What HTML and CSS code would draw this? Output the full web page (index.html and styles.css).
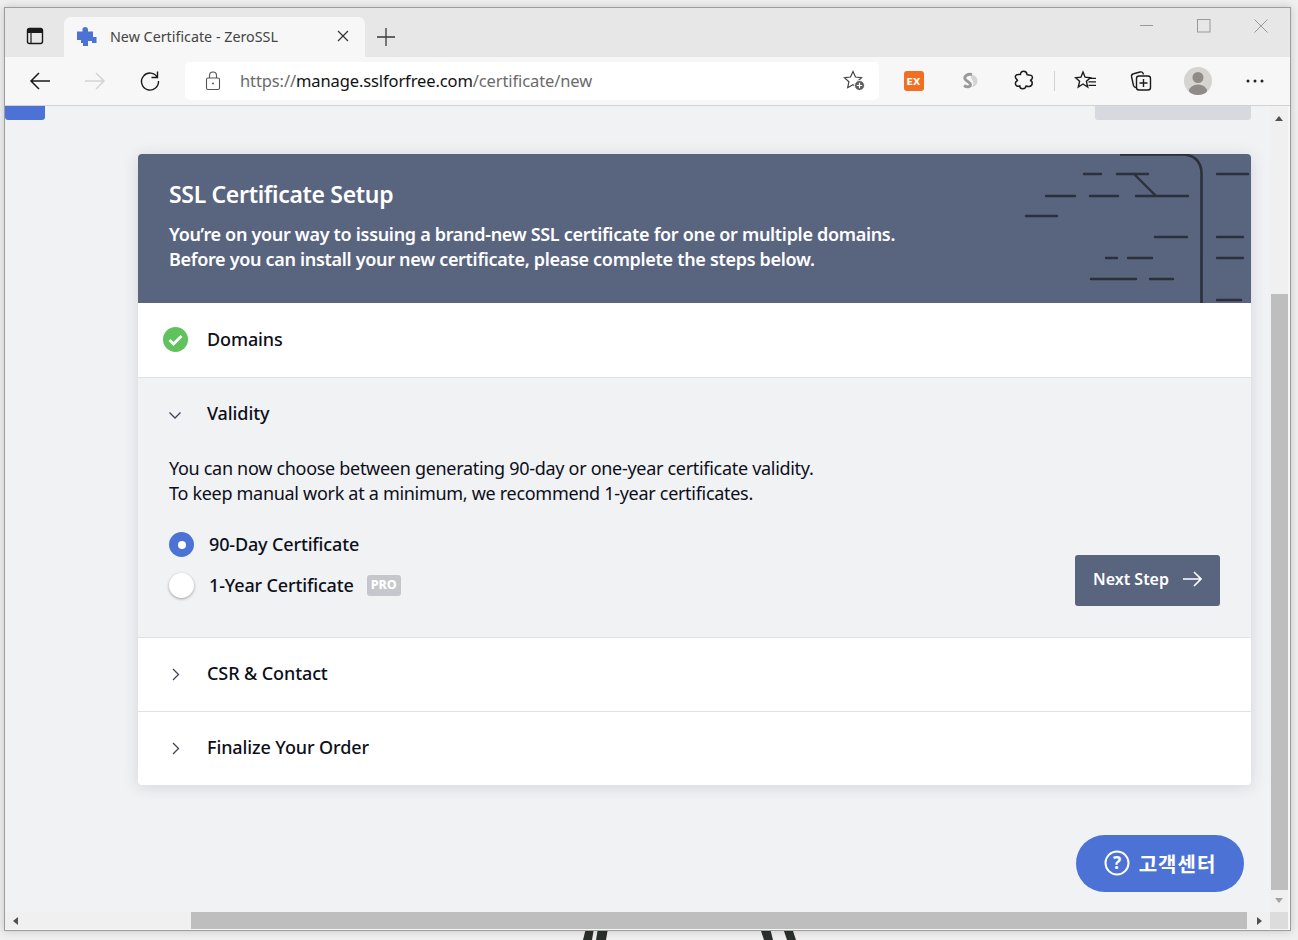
FILE: index.html
```html
<!DOCTYPE html>
<html lang="en">
<head>
<meta charset="utf-8">
<title>New Certificate - ZeroSSL</title>
<link rel="stylesheet" href="styles.css">
</head>
<body>
<svg class="desk" width="1298" height="940" viewBox="0 0 1298 940" aria-hidden="true">
  <path d="M583 940 L586 928 H594 L592 940Z M596 940 L598 928 H608 L606 940Z M760 928 H770 L773 940 H764Z M783 928 H792 L796 940 H787Z" fill="#2b302d"/>
</svg>
<div class="window">
  <div class="tabstrip">
    <div class="sidebtn">
      <svg width="20" height="20" viewBox="0 0 20 20"><rect x="2.500" y="2.500" width="15" height="15" rx="2" fill="none" stroke="#1a1a1a" stroke-width="1.400"/><path d="M2.500 4.500a2 2 0 0 1 2-2h11a2 2 0 0 1 2 2v2.500h-15z" fill="#1a1a1a"/><path d="M6 7v10.500" stroke="#1a1a1a" stroke-width="1.200"/></svg>
    </div>
    <div class="tab">
      <svg class="favicon" width="22" height="22" viewBox="0 0 22 22"><path d="M1 6.500h5.500v-1a3 3 0 0 1 2.500-3.500 3 3 0 0 1 3 3v1.500h5v5.500h3.500v6h-4.500v-2h-4v5h-5v-3h-2v-3h-4z" fill="#4d72d6"/></svg>
      <span class="tabtitle">New Certificate - ZeroSSL</span>
      <svg class="tabclose" width="12" height="12" viewBox="0 0 12 12"><path d="M1 1l10 10M11 1L1 11" stroke="#333" stroke-width="1.200"/></svg>
    </div>
    <svg class="newtab" width="18" height="18" viewBox="0 0 18 18"><path d="M9 0v18M0 9h18" stroke="#3a3a3a" stroke-width="1.300"/></svg>
    <div class="wincontrols">
      <svg class="winbtn" width="14" height="14" viewBox="0 0 14 14"><path d="M0 6.500h13" stroke="#999" stroke-width="1"/></svg>
      <svg class="winbtn" width="14" height="14" viewBox="0 0 14 14"><rect x=".5" y=".5" width="12.500" height="12.500" fill="none" stroke="#999" stroke-width="1"/></svg>
      <svg class="winbtn" width="14" height="14" viewBox="0 0 14 14"><path d="M.5 .5l13 13M13.500 .5l-13 13" stroke="#999" stroke-width="1"/></svg>
    </div>
  </div>
  <div class="toolbar">
    <div class="tbtn"><svg width="22" height="20" viewBox="0 0 22 20"><path d="M21 10H2M10 2l-8 8 8 8" fill="none" stroke="#1a1a1a" stroke-width="1.500"/></svg></div>
    <div class="tbtn"><svg width="22" height="20" viewBox="0 0 22 20"><path d="M1 10h19M12 2l8 8-8 8" fill="none" stroke="#d4d4d4" stroke-width="1.500"/></svg></div>
    <div class="tbtn"><svg width="22" height="22" viewBox="0 0 22 22"><path d="M18.500 7.500A8.500 8.500 0 1 0 19.500 11M18.500 1.500v6h-6" fill="none" stroke="#1a1a1a" stroke-width="1.400"/></svg></div>
    <div class="addressbar">
      <svg class="lock" width="16" height="20" viewBox="0 0 16 20"><rect x="1.500" y="7" width="13" height="11.500" rx="1.500" fill="none" stroke="#555" stroke-width="1.100"/><path d="M4.500 7V4.500a3.500 3.500 0 0 1 7 0V7" fill="none" stroke="#555" stroke-width="1.100"/><circle cx="8" cy="12.500" r="1" fill="#555"/></svg>
      <span class="url"><span class="urlmuted">https://</span>manage.sslforfree.com<span class="urlmuted">/certificate/new</span></span>
      <svg class="favadd" width="24" height="24" viewBox="0 0 24 24"><path d="M10 2.500l2.500 5.500 6 .7-4.400 4 1.200 6-5.300-3-5.300 3 1.200-6-4.400-4 6-.7z" fill="none" stroke="#444" stroke-width="1.200"/><circle cx="16.500" cy="16.500" r="5" fill="#5e5e5e" stroke="#fff"/><path d="M16.500 13.800v5.400M13.800 16.500h5.400" stroke="#fff" stroke-width="1.200"/></svg>
    </div>
    <div class="tbtn first"><span class="ex">EX</span></div>
    <div class="tbtn"><svg width="20" height="18" viewBox="0 0 20 18"><path d="M12 2.500c4 .5 6.500 3 6.500 6.500s-3 6-6 6c2-2 2.500-4 1-6.500-1-1.500-2-3.500-1.500-6z" fill="#d4d4d4"/><path d="M13 2.500C9 1.500 4.800 4 6 7c1 2.500 6 3 5.500 6-.3 2-3.500 2.500-6.500 .5" fill="none" stroke="#9a9a9a" stroke-width="2.800"/></svg></div>
    <div class="tbtn"><svg width="22" height="22" viewBox="0 0 22 22"><path d="M7.500 4.500c-.3-4.300 6.300-4.300 6.500 0 0 1 4-.5 5 1.500s-.3 4-2 4.500c2.800.3 3.300 5-.5 6-1.500.4-3-.6-3.500-.5-.3 3.700-6.200 3.700-6.300 0-2 1-4.700-.5-4.200-3 .3-2 2-2 2-2.500 0-1-3-2-2-4.500s4.300-1 5-1.500z" fill="none" stroke="#1a1a1a" stroke-width="1.500"/></svg></div>
    <div class="tsep"></div>
    <div class="tbtn"><svg width="24" height="24" viewBox="0 0 24 24"><path d="M9 3l2.100 5.200 5.400.5-4.100 3.600 1.300 5.700-4.700-3-4.700 3 1.300-5.700L1.500 8.700l5.400-.5z" fill="none" stroke="#1a1a1a" stroke-width="1.400"/><path d="M15.500 9.300h6.500M14.500 12.800h7.500M14.500 16.300h7.500" stroke="#1a1a1a" stroke-width="1.200"/></svg></div>
    <div class="tbtn"><svg width="24" height="24" viewBox="0 0 24 24"><path d="M7 18.500c-1 0-2-.5-2.500-2L2.600 8c-.4-2 .5-3 2-3.300L11 3c2-.5 3 .5 3.500 2.500" fill="none" stroke="#1a1a1a" stroke-width="1.400"/><rect x="7.500" y="7" width="14" height="14" rx="2.500" fill="#f7f7f7" stroke="#1a1a1a" stroke-width="1.400"/><path d="M14.500 10v8M10.500 14h8" stroke="#1a1a1a" stroke-width="1.400"/></svg></div>
    <div class="tbtn tight"><svg width="28" height="28" viewBox="0 0 28 28"><defs><clipPath id="av"><circle cx="14" cy="14" r="14"/></clipPath></defs><circle cx="14" cy="14" r="14" fill="#d5d4d0"/><g clip-path="url(#av)" fill="#8f8c88"><circle cx="14" cy="10.500" r="5.500"/><ellipse cx="14" cy="24" rx="9" ry="6.500"/></g></svg></div>
    <div class="tbtn tight"><svg width="18" height="4" viewBox="0 0 18 4"><circle cx="2" cy="2" r="1.500" fill="#222"/><circle cx="9" cy="2" r="1.500" fill="#222"/><circle cx="16" cy="2" r="1.500" fill="#222"/></svg></div>
  </div>
  <div class="viewport">
    <main class="page">
      <div class="topstub">
        <div class="stub-blue"></div>
        <div class="stub-gray"></div>
      </div>
      <section class="card">
        <header class="card-head">
          <svg class="decor" width="240" height="149" viewBox="1020 154 240 149" aria-hidden="true">
            <g fill="none" stroke="#2b303b" stroke-width="2.400" stroke-linecap="round">
              <path d="M1084 174h17M1117 174h31M1217 174h31M1046 196h29M1090 196h28M1136 196h52M1026 216h31M1155 237h32M1217 237h26M1106 258h11M1128 258h24M1217 258h26M1091 279h45M1150 279h23M1217 300h24"/>
              <path d="M1135 175l20 20"/>
              <path d="M1120 154.500h62c12 0 19.500 7 19.500 19V303" stroke-linecap="butt" stroke-width="2.600"/>
            </g>
          </svg>
          <h1 class="card-title">SSL Certificate Setup</h1>
          <p class="card-sub">You’re on your way to issuing a brand-new SSL certificate for one or multiple domains.<br>Before you can install your new certificate, please complete the steps below.</p>
        </header>
        <div class="step">
          <svg class="step-icon" width="25" height="25" viewBox="0 0 25 25"><circle cx="12.500" cy="12.500" r="12.500" fill="#5fc25c"/><path d="M6.500 13l4 4 8-8" fill="none" stroke="#fff" stroke-width="2.800"/></svg>
          <span class="step-name">Domains</span>
        </div>
        <div class="step-open">
          <div class="step">
            <svg class="step-icon" width="25" height="25" viewBox="0 0 25 25"><path d="M6.500 10.500l5.500 5.500 5.500-5.500" fill="none" stroke="#3d4356" stroke-width="1.300"/></svg>
            <span class="step-name">Validity</span>
          </div>
          <div class="step-body">
            <p class="intro">You can now choose between generating 90-day or one-year certificate validity.<br>To keep manual work at a minimum, we recommend 1-year certificates.</p>
            <div class="choose">
              <div class="options">
                <label class="option"><span class="radio on"></span><span class="opt-text">90-Day Certificate</span></label>
                <label class="option"><span class="radio"></span><span class="opt-text">1-Year Certificate</span><span class="pro">PRO</span></label>
              </div>
              <button class="next" type="button">Next Step
                <svg width="20" height="16" viewBox="0 0 20 16"><path d="M1 8h18M12 1l7 7-7 7" fill="none" stroke="#fff" stroke-width="1.600"/></svg>
              </button>
            </div>
          </div>
        </div>
        <div class="step">
          <svg class="step-icon" width="25" height="25" viewBox="0 0 25 25"><path d="M10 7l5.500 5.500-5.500 5.500" fill="none" stroke="#3d4356" stroke-width="1.300"/></svg>
          <span class="step-name raised">CSR &amp; Contact</span>
        </div>
        <div class="step">
          <svg class="step-icon" width="25" height="25" viewBox="0 0 25 25"><path d="M10 7l5.500 5.500-5.500 5.500" fill="none" stroke="#3d4356" stroke-width="1.300"/></svg>
          <span class="step-name raised">Finalize Your Order</span>
        </div>
      </section>
      <button class="help" type="button">
        <svg width="26" height="26" viewBox="0 0 26 26"><circle cx="13" cy="13" r="11.500" fill="none" stroke="#fff" stroke-width="2"/><text x="13" y="19" text-anchor="middle" class="qmark">?</text></svg>
        <span>고객센터</span>
      </button>
    </main>
    <div class="vscroll">
      <span class="arrow up"></span>
      <div class="vtrack"><div class="vthumb"></div></div>
      <span class="arrow down"></span>
    </div>
    <div class="hscroll">
      <span class="arrow left"></span>
      <div class="htrack"><div class="hthumb"></div></div>
      <span class="arrow right"></span>
    </div>
    <div class="corner"></div>
  </div>
</div>
</body>
</html>
```
FILE: styles.css
```css
* { box-sizing: border-box; }
html, body { margin: 0; height: 940px; overflow: hidden; }
body {
  position: relative;
  background: #efefef;
  padding: 7px 0 0 4px;
  font-family: "Noto Sans", "Noto Sans CJK KR", sans-serif;
  color: #0c0f1a;
}
.desk { position: absolute; left: 0; top: 0; }

.window {
  position: relative;
  width: 1287px;
  height: 924px;
  border: 1px solid #9d9d9d;
  background: #f7f7f7;
  display: flex;
  flex-direction: column;
  box-shadow: 0 0 8px rgba(0,0,0,.18);
}

.tabstrip {
  height: 49px;
  background: #e7e7e7;
  display: flex;
  align-items: flex-end;
  flex: none;
}
.sidebtn { width: 59px; height: 40px; padding-bottom: 2px; display: flex; align-items: center; justify-content: center; }
.tab {
  width: 301px;
  height: 40px;
  background: #f7f7f7;
  border-radius: 7px 7px 0 0;
  display: flex;
  align-items: center;
  padding: 0 16px 2px 12px;
}
.favicon { flex: none; }
.tabtitle { margin-left: 12px; font-size: 14.300px; color: #444; white-space: nowrap; flex: 1; }
.tabclose { flex: none; }
.newtab { margin: 0 0 11px 12px; flex: none; }
.wincontrols { margin-left: auto; align-self: flex-start; display: flex; padding: 11px 22px 0 0; gap: 43px; }
.winbtn { flex: none; }

.toolbar {
  height: 49px;
  background: #f7f7f7;
  border-bottom: 1px solid #d2d2d2;
  display: flex;
  align-items: center;
  padding-left: 7px;
  flex: none;
}
.tbtn { width: 55px; height: 38px; display: flex; align-items: center; justify-content: center; flex: none; }
.tbtn.first { margin-left: 7px; }
.tbtn.tight { margin-left: 2px; }
.tsep { width: 1px; height: 20px; background: #d2d2d2; margin: 0 3px; flex: none; }
.addressbar {
  width: 694px;
  height: 38px;
  margin-left: 8px;
  background: #fff;
  border-radius: 5px;
  display: flex;
  align-items: center;
  padding: 0 12px 0 20px;
  flex: none;
}
.lock { flex: none; }
.url { margin-left: 19px; padding-bottom: 2px; font-size: 16.500px; letter-spacing: -.11px; color: #111; white-space: nowrap; flex: 1; }
.urlmuted { color: #6b6b6b; }
.favadd { flex: none; }
.ex {
  width: 20px; height: 20px; border-radius: 3px; background: #f26f21; color: #fff;
  font: 700 9.500px "DejaVu Sans", sans-serif; display: flex; align-items: center; justify-content: center;
}

.viewport {
  position: relative;
  flex: 1;
  display: grid;
  grid-template-columns: 1265px 18px;
  grid-template-rows: 806px 17px;
  background: #f7f7f7;
  min-height: 0;
}

.page { position: relative; overflow: hidden; background: #f1f2f4; }
.topstub { display: flex; justify-content: space-between; padding-right: 19px; height: 14px; }
.stub-blue { width: 40px; background: #4d72d6; border-radius: 0 0 3px 3px; }
.stub-gray { width: 156px; background: #d7d9de; border-radius: 0 0 3px 3px; }

.card {
  width: 1113px;
  margin: 34px 0 0 133px;
  background: #fff;
  border-radius: 4px;
  box-shadow: 0 2px 16px rgba(30,40,70,.14);
  overflow: hidden;
}
.card-head {
  position: relative;
  height: 149px;
  background: #59647f;
  color: #fff;
  padding: 23px 31px 0;
}
.decor { position: absolute; left: 882px; top: 0; }
.card-title { margin: 0; font-size: 23px; line-height: 34px; font-weight: 600; letter-spacing: -.33px; }
.card-sub { margin: 11px 0 0; font-size: 18px; line-height: 25px; font-weight: 600; letter-spacing: -.31px; }

.step { height: 74px; border-bottom: 1px solid #dfe1e6; display: flex; align-items: center; padding-left: 25px; }
.step:first-of-type { height: 75px; padding-bottom: 1px; }
.step:last-child { height: 73px; border-bottom: 0; }
.step-icon { flex: none; }
.step-name { margin: -2px 0 0 19px; font-size: 18px; font-weight: 500; letter-spacing: -.1px; }
.step-name.raised { margin-top: -3px; }

.step-open { background: #f1f2f4; height: 260px; border-bottom: 1px solid #dfe1e6; }
.step-open .step { border-bottom: 0; height: 72px; padding-bottom: 0; }
.step-body { padding: 6px 31px 0; }
.intro { margin: 0; font-size: 18px; line-height: 25px; letter-spacing: -.3px; }
.choose { display: flex; justify-content: space-between; margin-top: 26px; height: 74px; }
.options { display: flex; flex-direction: column; gap: 16px; padding-bottom: 8px; }
.option { display: flex; align-items: center; height: 25px; }
.radio { width: 25px; height: 25px; border-radius: 50%; background: #fff; box-shadow: 0 1px 3px rgba(0,0,0,.35); flex: none; }
.radio.on { background: #4d72d6; box-shadow: none; display: flex; align-items: center; justify-content: center; }
.radio.on::after { content: ""; width: 8px; height: 8px; border-radius: 50%; background: #fff; }
.opt-text { margin: -2px 0 0 15px; font-size: 18px; font-weight: 500; letter-spacing: -.15px; }
.pro { margin-left: 13px; width: 34px; height: 21px; border-radius: 3px; background: #c5c7cd; color: #fff; font-size: 12.500px; font-weight: 800; text-align: center; line-height: 20px; }
.next {
  align-self: flex-end;
  width: 145px;
  height: 51px;
  border: 0;
  border-radius: 3px;
  background: #59647f;
  color: #fff;
  font: 600 16px "Noto Sans", sans-serif;
  display: flex;
  align-items: center;
  justify-content: center;
  gap: 13px;
  padding: 0 0 3px;
}

.help {
  position: absolute;
  left: 1071px;
  top: 729px;
  width: 168px;
  height: 57px;
  border: 0;
  border-radius: 29px;
  background: #4d72d6;
  color: #fff;
  display: flex;
  align-items: center;
  justify-content: center;
  gap: 9px;
  padding: 0 0 1px;
  font: 700 20px "Noto Sans CJK KR", "Noto Sans", sans-serif;
  letter-spacing: 1px;
}
.qmark { font: 700 17px "Noto Sans", sans-serif; fill: #fff; letter-spacing: 0; }

.vscroll { display: flex; flex-direction: column; background: #f0f0f0; align-items: stretch; }
.vtrack { flex: 1; display: flex; flex-direction: column; justify-content: flex-end; }
.vthumb { height: 596px; margin: 0 0 3px 1px; background: #bebebe; }
.hscroll { display: flex; align-items: center; background: #f0f0f0; }
.htrack { flex: 1; height: 17px; }
.hthumb { margin-left: 170px; width: 1056px; height: 17px; background: #bebebe; }
.corner { background: #dcdcdc; }

.arrow { flex: none; width: 0; height: 0; display: block; }
.arrow.up { margin: 10px auto 4px; border: 4.500px solid transparent; border-top: 0; border-bottom: 5px solid #505050; }
.arrow.down { margin: 5px auto 9px; border: 4.500px solid transparent; border-bottom: 0; border-top: 5px solid #a3a3a3; }
.arrow.left { margin: 0 3px 0 8px; border: 4.500px solid transparent; border-left: 0; border-right: 5px solid #505050; }
.arrow.right { margin: 0 8px 0 6px; border: 4.500px solid transparent; border-right: 0; border-left: 5px solid #505050; }
```
